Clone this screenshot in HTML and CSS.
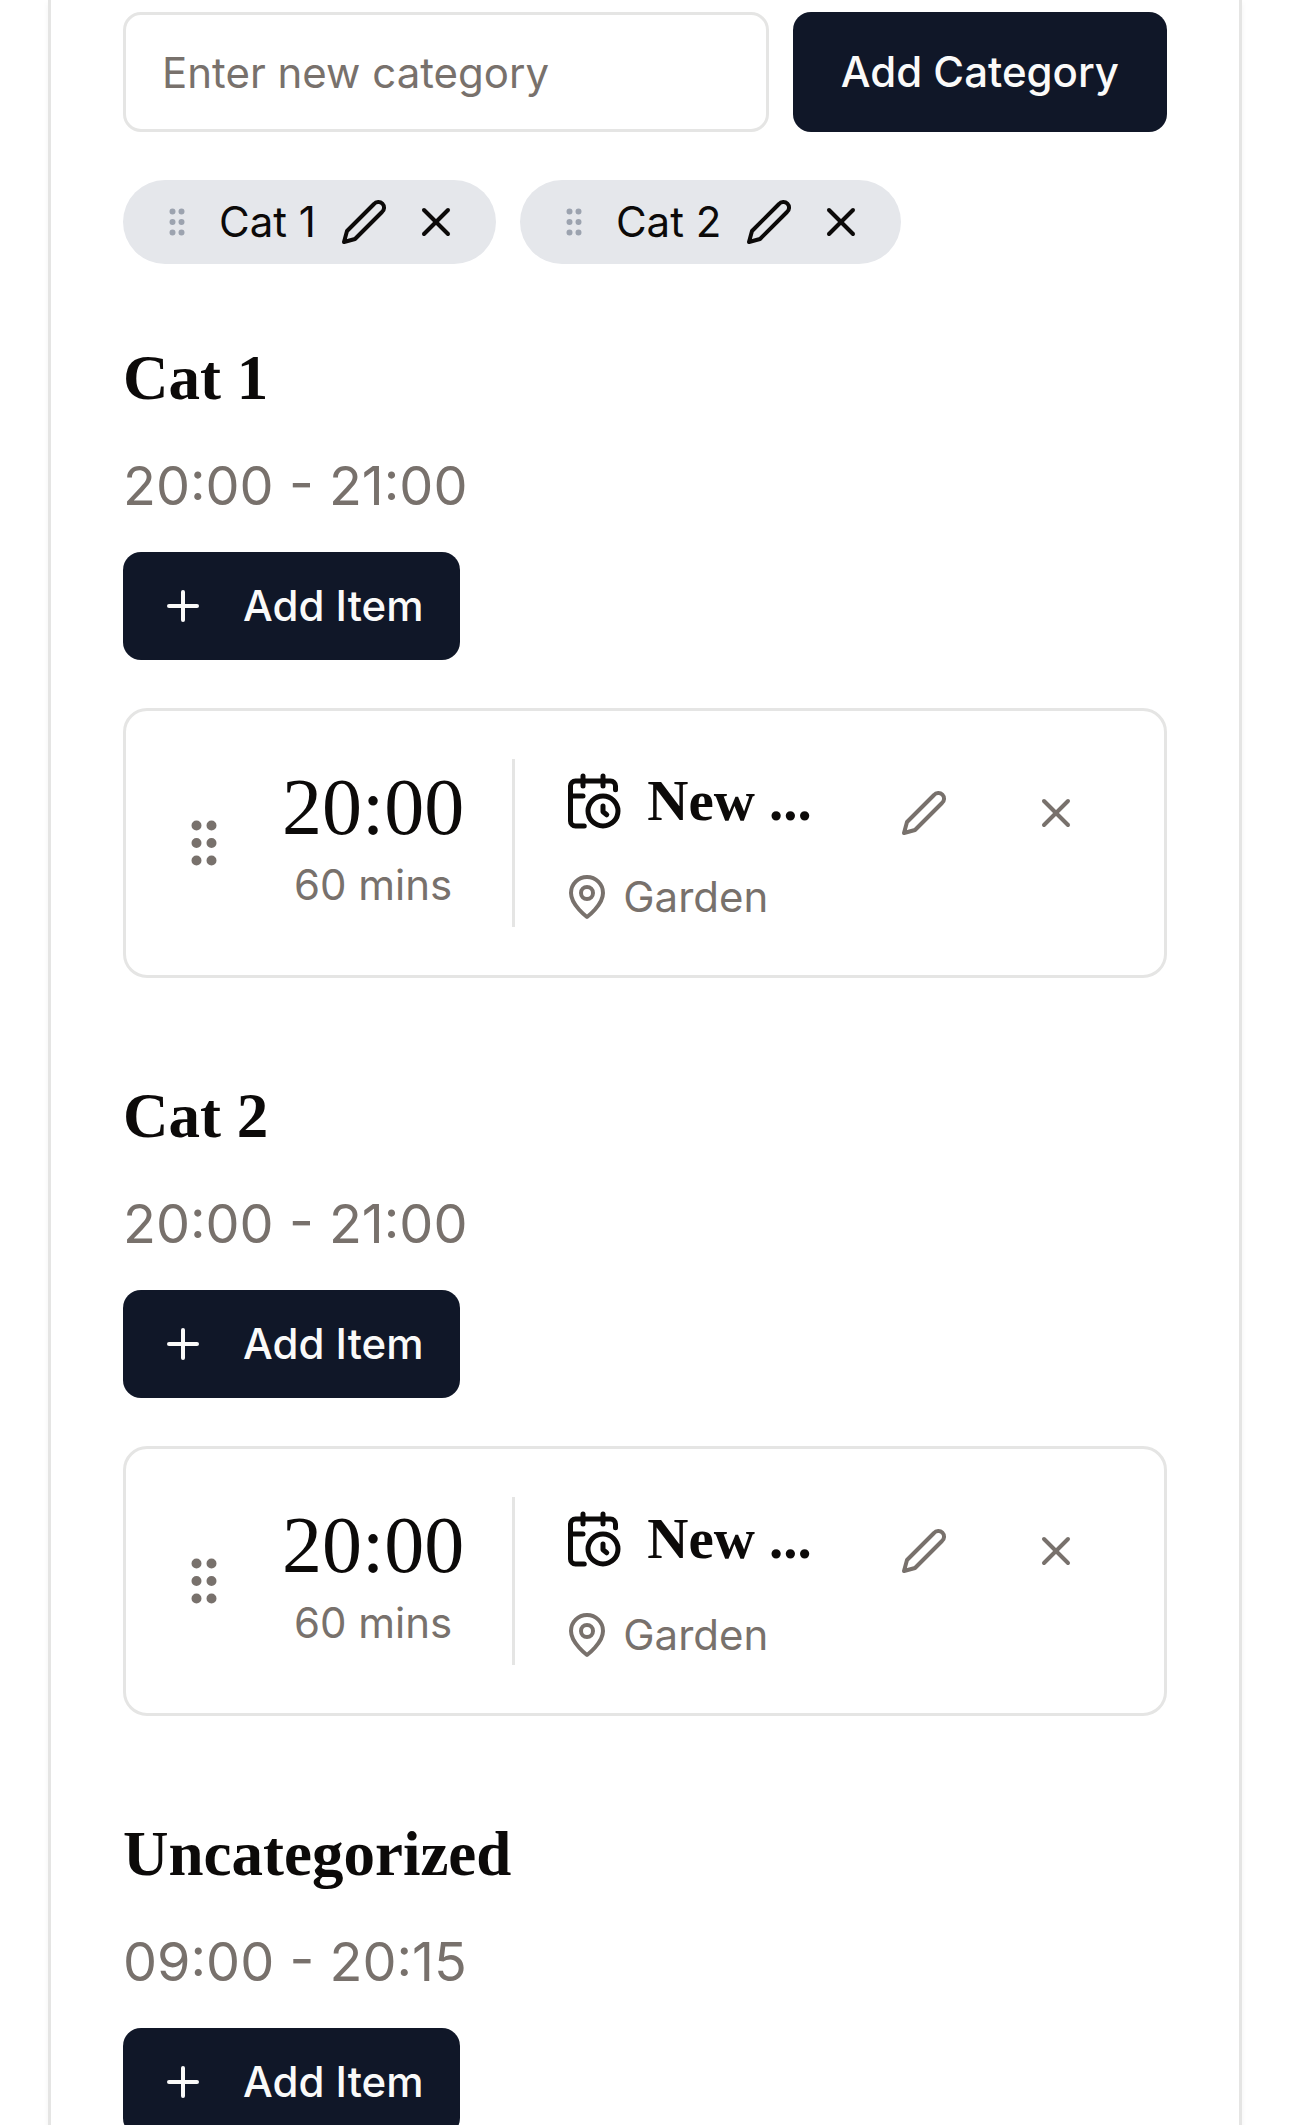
FILE: index.html
```html
<!DOCTYPE html>
<html lang="en">
<head>
<meta charset="utf-8">
<meta name="viewport" content="width=device-width, initial-scale=1">
<title>Schedule</title>
<link rel="stylesheet" href="styles.css">
</head>
<body>
<svg class="sprite" aria-hidden="true">
  <symbol id="grip" viewBox="0 0 24 24"><circle cx="9" cy="12" r="1"/><circle cx="9" cy="5" r="1"/><circle cx="9" cy="19" r="1"/><circle cx="15" cy="12" r="1"/><circle cx="15" cy="5" r="1"/><circle cx="15" cy="19" r="1"/></symbol>
  <symbol id="pencil" viewBox="0 0 24 24"><path d="M17 3a2.85 2.83 0 1 1 4 4L7.5 20.500 2 22l1.500-5.500Z"/></symbol>
  <symbol id="close" viewBox="0 0 24 24"><path d="M18 6 6 18"/><path d="m6 6 12 12"/></symbol>
  <symbol id="plus" viewBox="0 0 24 24"><path d="M5 12h14"/><path d="M12 5v14"/></symbol>
  <symbol id="calendar-clock" viewBox="0 0 24 24"><path d="M21 7.500V6a2 2 0 0 0-2-2H5a2 2 0 0 0-2 2v14a2 2 0 0 0 2 2h3.500"/><path d="M16 2v4"/><path d="M8 2v4"/><path d="M3 10h5"/><path d="M17.500 17.500 16 16.300V14"/><circle cx="16" cy="16" r="6"/></symbol>
  <symbol id="pin" viewBox="0 0 24 24"><path d="M20 10c0 6-8 12-8 12s-8-6-8-12a8 8 0 0 1 16 0Z"/><circle cx="12" cy="10" r="3"/></symbol>
</svg>
<main class="panel">
  <form class="new-category">
    <input class="field" type="text" placeholder="Enter new category" aria-label="New category">
    <button class="btn btn-wide" type="button">Add Category</button>
  </form>
  <ul class="chips">
    <li class="chip">
      <svg class="icon icon-grip"><use href="#grip"/></svg>
      <span>Cat 1</span>
      <button class="plain" type="button" aria-label="Edit Cat 1"><svg class="icon"><use href="#pencil"/></svg></button>
      <button class="plain" type="button" aria-label="Remove Cat 1"><svg class="icon"><use href="#close"/></svg></button>
    </li>
    <li class="chip">
      <svg class="icon icon-grip"><use href="#grip"/></svg>
      <span>Cat 2</span>
      <button class="plain" type="button" aria-label="Edit Cat 2"><svg class="icon"><use href="#pencil"/></svg></button>
      <button class="plain" type="button" aria-label="Remove Cat 2"><svg class="icon"><use href="#close"/></svg></button>
    </li>
  </ul>
  <div class="sections">
    <section class="section">
      <h2 class="section-title">Cat 1</h2>
      <p class="range">20:00 - 21:00</p>
      <button class="btn" type="button"><svg class="icon"><use href="#plus"/></svg>Add Item</button>
      <article class="item">
        <svg class="icon icon-lg muted"><use href="#grip"/></svg>
        <div class="when">
          <span class="time">20:00</span>
          <span class="muted">60 mins</span>
        </div>
        <div class="what">
          <h3 class="item-title"><svg class="icon icon-lg"><use href="#calendar-clock"/></svg>New ...</h3>
          <p class="place"><svg class="icon"><use href="#pin"/></svg>Garden</p>
        </div>
        <div class="actions">
          <button class="plain action" type="button" aria-label="Edit item"><svg class="icon"><use href="#pencil"/></svg></button>
          <button class="plain action" type="button" aria-label="Remove item"><svg class="icon"><use href="#close"/></svg></button>
        </div>
      </article>
    </section>
    <section class="section">
      <h2 class="section-title">Cat 2</h2>
      <p class="range">20:00 - 21:00</p>
      <button class="btn" type="button"><svg class="icon"><use href="#plus"/></svg>Add Item</button>
      <article class="item">
        <svg class="icon icon-lg muted"><use href="#grip"/></svg>
        <div class="when">
          <span class="time">20:00</span>
          <span class="muted">60 mins</span>
        </div>
        <div class="what">
          <h3 class="item-title"><svg class="icon icon-lg"><use href="#calendar-clock"/></svg>New ...</h3>
          <p class="place"><svg class="icon"><use href="#pin"/></svg>Garden</p>
        </div>
        <div class="actions">
          <button class="plain action" type="button" aria-label="Edit item"><svg class="icon"><use href="#pencil"/></svg></button>
          <button class="plain action" type="button" aria-label="Remove item"><svg class="icon"><use href="#close"/></svg></button>
        </div>
      </article>
    </section>
    <section class="section">
      <h2 class="section-title">Uncategorized</h2>
      <p class="range">09:00 - 20:15</p>
      <button class="btn" type="button"><svg class="icon"><use href="#plus"/></svg>Add Item</button>
    </section>
  </div>
</main>
</body>
</html>
```
FILE: styles.css
```css
:root {
  --ink: #0c0a09;
  --muted: #78716c;
  --line: #e5e5e4;
  --navy: #101728;
  --serif: "Liberation Serif", "Times New Roman", serif;
}

* { box-sizing: border-box; margin: 0; }

body {
  height: 100vh;
  overflow: hidden;
  padding: 0 48px;
  background: #fff;
  color: var(--ink);
  font: 400 42px/60px Inter, sans-serif;
}

.sprite { display: none; }

.icon {
  flex: none;
  display: block;
  width: 48px;
  height: 48px;
  fill: none;
  stroke: currentColor;
  stroke-width: 2;
  stroke-linecap: round;
  stroke-linejoin: round;
}
.icon-lg { width: 60px; height: 60px; }
.icon-grip { width: 36px; height: 36px; color: #9ca3af; }

.muted { color: var(--muted); }

.panel {
  padding: 12px 72px 72px;
  border: solid var(--line);
  border-width: 0 3px;
  box-shadow: 0 3px 6px rgb(0 0 0 / 5%);
}

.new-category { display: flex; gap: 24px; }

.field {
  flex: 1;
  min-width: 0;
  height: 120px;
  padding: 0 36px;
  border: 3px solid var(--line);
  border-radius: 18px;
  background: #fff;
  color: inherit;
  font: inherit;
}
.field::placeholder { color: var(--muted); opacity: 1; }

.btn {
  display: inline-flex;
  align-items: center;
  gap: 36px;
  padding: 24px 36px;
  border: 0;
  border-radius: 18px;
  background: var(--navy);
  color: #fafaf9;
  font: inherit;
  font-weight: 500;
}
.btn-wide { padding: 30px 48px; }

.plain {
  padding: 0;
  border: 0;
  background: none;
  color: inherit;
}

.chips {
  display: flex;
  flex-wrap: wrap;
  gap: 24px;
  margin-top: 48px;
  padding: 0;
  list-style: none;
}
.chip {
  display: flex;
  align-items: center;
  gap: 24px;
  padding: 12px 36px;
  border-radius: 42px;
  background: #e5e7eb;
}

.sections {
  display: grid;
  gap: 96px;
  margin-top: 72px;
}
.section {
  display: flex;
  flex-direction: column;
  align-items: flex-start;
  gap: 24px;
}
.section-title { font: 700 63px/84px var(--serif); }
.range {
  color: var(--muted);
  font-size: 54px;
  line-height: 84px;
}

.item {
  display: flex;
  align-items: center;
  align-self: stretch;
  margin-top: 24px;
  padding: 48px;
  border: 3px solid var(--line);
  border-radius: 24px;
}
.when {
  display: flex;
  flex-direction: column;
  align-self: stretch;
  align-items: center;
  padding: 0 48px;
  border-right: 3px solid var(--line);
}
.time { font: 400 80px/96px var(--serif); }
.what {
  display: grid;
  flex: 1;
  gap: 24px;
  padding-left: 48px;
}
.item-title {
  display: flex;
  align-items: center;
  gap: 24px;
  font: 700 57px/84px var(--serif);
}
.place {
  display: flex;
  align-items: center;
  gap: 12px;
  color: var(--muted);
}
.actions {
  display: flex;
  align-self: flex-start;
  gap: 12px;
  color: var(--muted);
}
.action {
  display: grid;
  place-items: center;
  width: 120px;
  height: 108px;
}
```
